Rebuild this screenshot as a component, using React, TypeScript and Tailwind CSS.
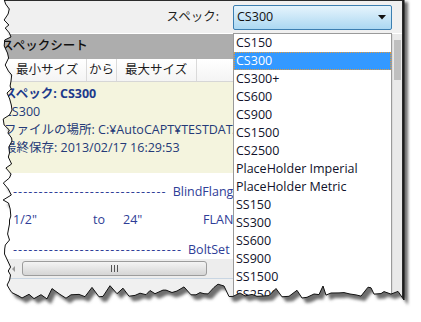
import React from "react";

// torn paper edge, built once from a fixed seed
function buildEdge() {
  let s = 11;
  const rnd = () => {
    s = (s * 16807) % 2147483647;
    return s / 2147483647;
  };
  const pts: string[] = ["M11,-3"];
  let y = 0;
  while (y < 288) {
    const x = rnd() < 0.25 ? 3 + rnd() * 3 : 7 + rnd() * 5;
    pts.push(`L${x.toFixed(1)},${y}`);
    y += 3 + Math.round(rnd() * 4);
  }
  pts.push("L10,290");
  let x = 12;
  while (x < 402) {
    const base = 292 + Math.sin(x / 37) * 2;
    const yy = rnd() < 0.2 ? base - 3 - rnd() * 5 : base + rnd() * 5;
    pts.push(`L${x},${yy.toFixed(1)}`);
    x += 3 + Math.round(rnd() * 5);
  }
  pts.push("L404,300 L404,-3 Z");
  return pts.join(" ");
}

const EDGE = buildEdge();

const items = [
  "CS150",
  "CS300",
  "CS300+",
  "CS600",
  "CS900",
  "CS1500",
  "CS2500",
  "PlaceHolder Imperial",
  "PlaceHolder Metric",
  "SS150",
  "SS300",
  "SS600",
  "SS900",
  "SS1500",
  "SS2500",
];

function TornOverlay() {
  return (
    <svg
      className="absolute inset-0 pointer-events-none"
      width={421}
      height={322}
      viewBox="0 0 421 322"
    >
      <defs>
        <mask id="outside">
          <rect x="0" y="0" width="421" height="322" fill="white" />
          <path d={EDGE} fill="black" />
        </mask>
        <filter id="soft" x="-10%" y="-10%" width="120%" height="120%">
          <feGaussianBlur stdDeviation="1.8" />
        </filter>
      </defs>
      <g mask="url(#outside)">
        <rect x="0" y="0" width="421" height="322" fill="white" />
        <path
          d={EDGE}
          transform="translate(4,5)"
          fill="#6e6e6e"
          filter="url(#soft)"
        />
      </g>
      <path d={EDGE} fill="none" stroke="#111" strokeWidth="1" />
    </svg>
  );
}

export default function App() {
  return (
    <div className="relative w-[421px] h-[322px] overflow-hidden bg-white font-['Open_Sans','Noto_Sans_CJK_JP',sans-serif] text-[12.5px] leading-none">
      <div className="w-[404px] h-[310px] flex flex-col bg-[#f0f0f0] border-t border-r-2 border-[#2b2b2b]">
        {/* toolbar */}
        <div className="h-[33px] flex items-center justify-end pr-[10px] border-b border-white">
          <span className="text-[#1e1e1e] mr-[14px] mt-[1px]">スペック:</span>
          <div className="w-[159px] h-[25px] mt-[1px] rounded-[2px] border border-[#3c7fb1] bg-gradient-to-b from-[#e6f4fc] to-[#abd8f2] flex items-center pl-[3px] pr-[5px]">
            <span className="flex-1 text-[#111]">CS300</span>
            <svg width="8" height="5" viewBox="0 0 8 5">
              <path d="M0,0 L8,0 L4,4.5 Z" fill="#111" />
            </svg>
          </div>
        </div>

        <div className="flex flex-1">
          <div className="flex flex-col w-[392px]">
            <div className="h-[25px] bg-[#adadad] flex items-center pl-[1px] text-[#111] font-medium">
              スペックシート
            </div>
            <div className="h-[23px] flex bg-gradient-to-b from-white to-[#f4f4f4] border-b border-[#d6d6d6] text-[#1e1e1e]">
              <div className="w-[87px] pl-[16px] flex items-center border-r border-[#dadada]">
                最小サイズ
              </div>
              <div className="w-[30px] flex items-center justify-center border-r border-[#dadada]">
                から
              </div>
              <div className="w-[80px] pl-[8px] flex items-center border-r border-[#dadada]">
                最大サイズ
              </div>
            </div>
            <div className="h-[91px] bg-[#f4f4de] pl-[4px] pt-[3px] flex flex-col text-[#243a78] leading-[18px]">
              <span className="font-bold text-[#1d3a8c]">スペック: CS300</span>
              <span>CS300</span>
              <span className="whitespace-nowrap">ファイルの場所: C:¥AutoCAPT¥TESTDATA</span>
              <span>最終保存: 2013/02/17 16:29:53</span>
            </div>
            <div className="bg-white flex-1 flex flex-col text-[#2e3d97] pl-[13px] pt-[10px]">
              <div className="h-[18px] flex items-center whitespace-nowrap">
                <span className="tracking-[1.1px]">------------------------------</span>
                <span className="ml-[6px]">BlindFlange</span>
              </div>
              <div className="h-[18px] mt-[10px] flex items-center">
                <span className="w-[80px]">1/2"</span>
                <span className="w-[30px]">to</span>
                <span className="w-[80px]">24"</span>
                <span>FLANGE</span>
              </div>
              <div className="h-[18px] mt-[12px] flex items-center whitespace-nowrap">
                <span className="tracking-[1.1px]">---------------------------------</span>
                <span className="ml-[6px]">BoltSet</span>
              </div>
            </div>
            <div className="h-[20px] bg-[#ededed] border-b border-[#c9d6e3] flex items-center">
              <svg width="12" height="12" viewBox="0 0 12 12" className="ml-[8px]">
                <path d="M7,3 L4,6 L7,9 Z" fill="#9a9a9a" />
              </svg>
              <div className="ml-[2px] w-[185px] h-[15px] rounded-[3px] border border-[#9c9c9c] bg-gradient-to-b from-[#f4f4f4] to-[#d5d5d5] flex items-center justify-center">
                <svg width="7" height="7" viewBox="0 0 7 7">
                  <path d="M0.5,0 V7 M3.5,0 V7 M6.5,0 V7" stroke="#555" strokeWidth="1" />
                </svg>
              </div>
            </div>
            <div className="flex-1" />
          </div>
          <div className="w-[10px] bg-[#e9e9e9] flex flex-col border-l border-[#dcdcdc]">
            <div className="mt-[6px] h-[40px] mx-[1px] bg-[#bfbfbf]" />
          </div>
        </div>
      </div>

      {/* open dropdown list */}
      <div className="absolute left-[233px] top-[33px] w-[159px] h-[289px] bg-white border border-[#9a9a9a] flex flex-col">
        {items.map((it, i) => (
          <div
            key={it}
            className={
              i === 1
                ? "h-[18px] shrink-0 flex items-center pl-[2px] bg-[#3399ff] text-white outline-1 outline-dotted outline-[#e39a3a] -outline-offset-1"
                : "h-[18px] shrink-0 flex items-center pl-[2px] text-[#10122a]"
            }
          >
            {it}
          </div>
        ))}
      </div>

      <TornOverlay />
    </div>
  );
}
